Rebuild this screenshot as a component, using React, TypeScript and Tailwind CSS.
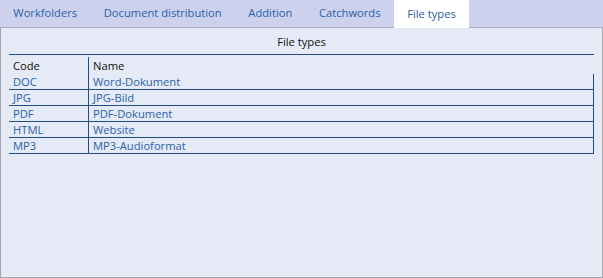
import React from 'react';

const tabs = ['Workfolders', 'Document distribution', 'Addition', 'Catchwords', 'File types'];

const rows = [
  { code: 'DOC', name: 'Word-Dokument' },
  { code: 'JPG', name: 'JPG-Bild' },
  { code: 'PDF', name: 'PDF-Dokument' },
  { code: 'HTML', name: 'Website' },
  { code: 'MP3', name: 'MP3-Audioformat' },
];

export default function App() {
  const active = 'File types';

  return (
    <div className="w-[603px] h-[278px] flex flex-col bg-[#e6eaf6] text-[11.2px] font-['Open_Sans','Noto_Sans',sans-serif]">
      {/* tab strip */}
      <div className="h-[28px] flex items-stretch bg-[#ccd2ee] border-b border-[#a9adbb]">
        {tabs.map((t) => (
          <div
            key={t}
            className={`px-[13.3px] flex items-center text-[#2b5ea6] ${
              t === active ? 'bg-white -mb-px' : ''
            }`}
          >
            {t}
          </div>
        ))}
      </div>

      {/* panel */}
      <div className="flex-1 border-x border-b border-[#a3a5ad] px-[8px]">
        <div className="w-[585px]">
          <div className="h-[27px] flex items-center justify-center border-b border-[#1f4f8b] text-[#111] pt-[2px]">
            File types
          </div>

          <div className="grid grid-cols-[79px_1fr]">
            <div className="h-[19px] flex items-center pl-[4px] pt-[3px] text-[#111]">Code</div>
            <div className="h-[17px] mt-[2px] flex items-center pl-[4px] pt-[1px] text-[#111] border-l border-[#1f4f8b]">
              Name
            </div>
            {rows.map((r) => (
              <React.Fragment key={r.code}>
                <div className="h-[16px] flex items-center pl-[4px] pt-[1px] border-b border-[#1f4f8b] text-[#2862ab]">
                  {r.code}
                </div>
                <div className="h-[16px] flex items-center pl-[4px] pt-[1px] border-b border-x border-[#1f4f8b] text-[#2862ab]">
                  {r.name}
                </div>
              </React.Fragment>
            ))}
          </div>
        </div>
      </div>
    </div>
  );
}
